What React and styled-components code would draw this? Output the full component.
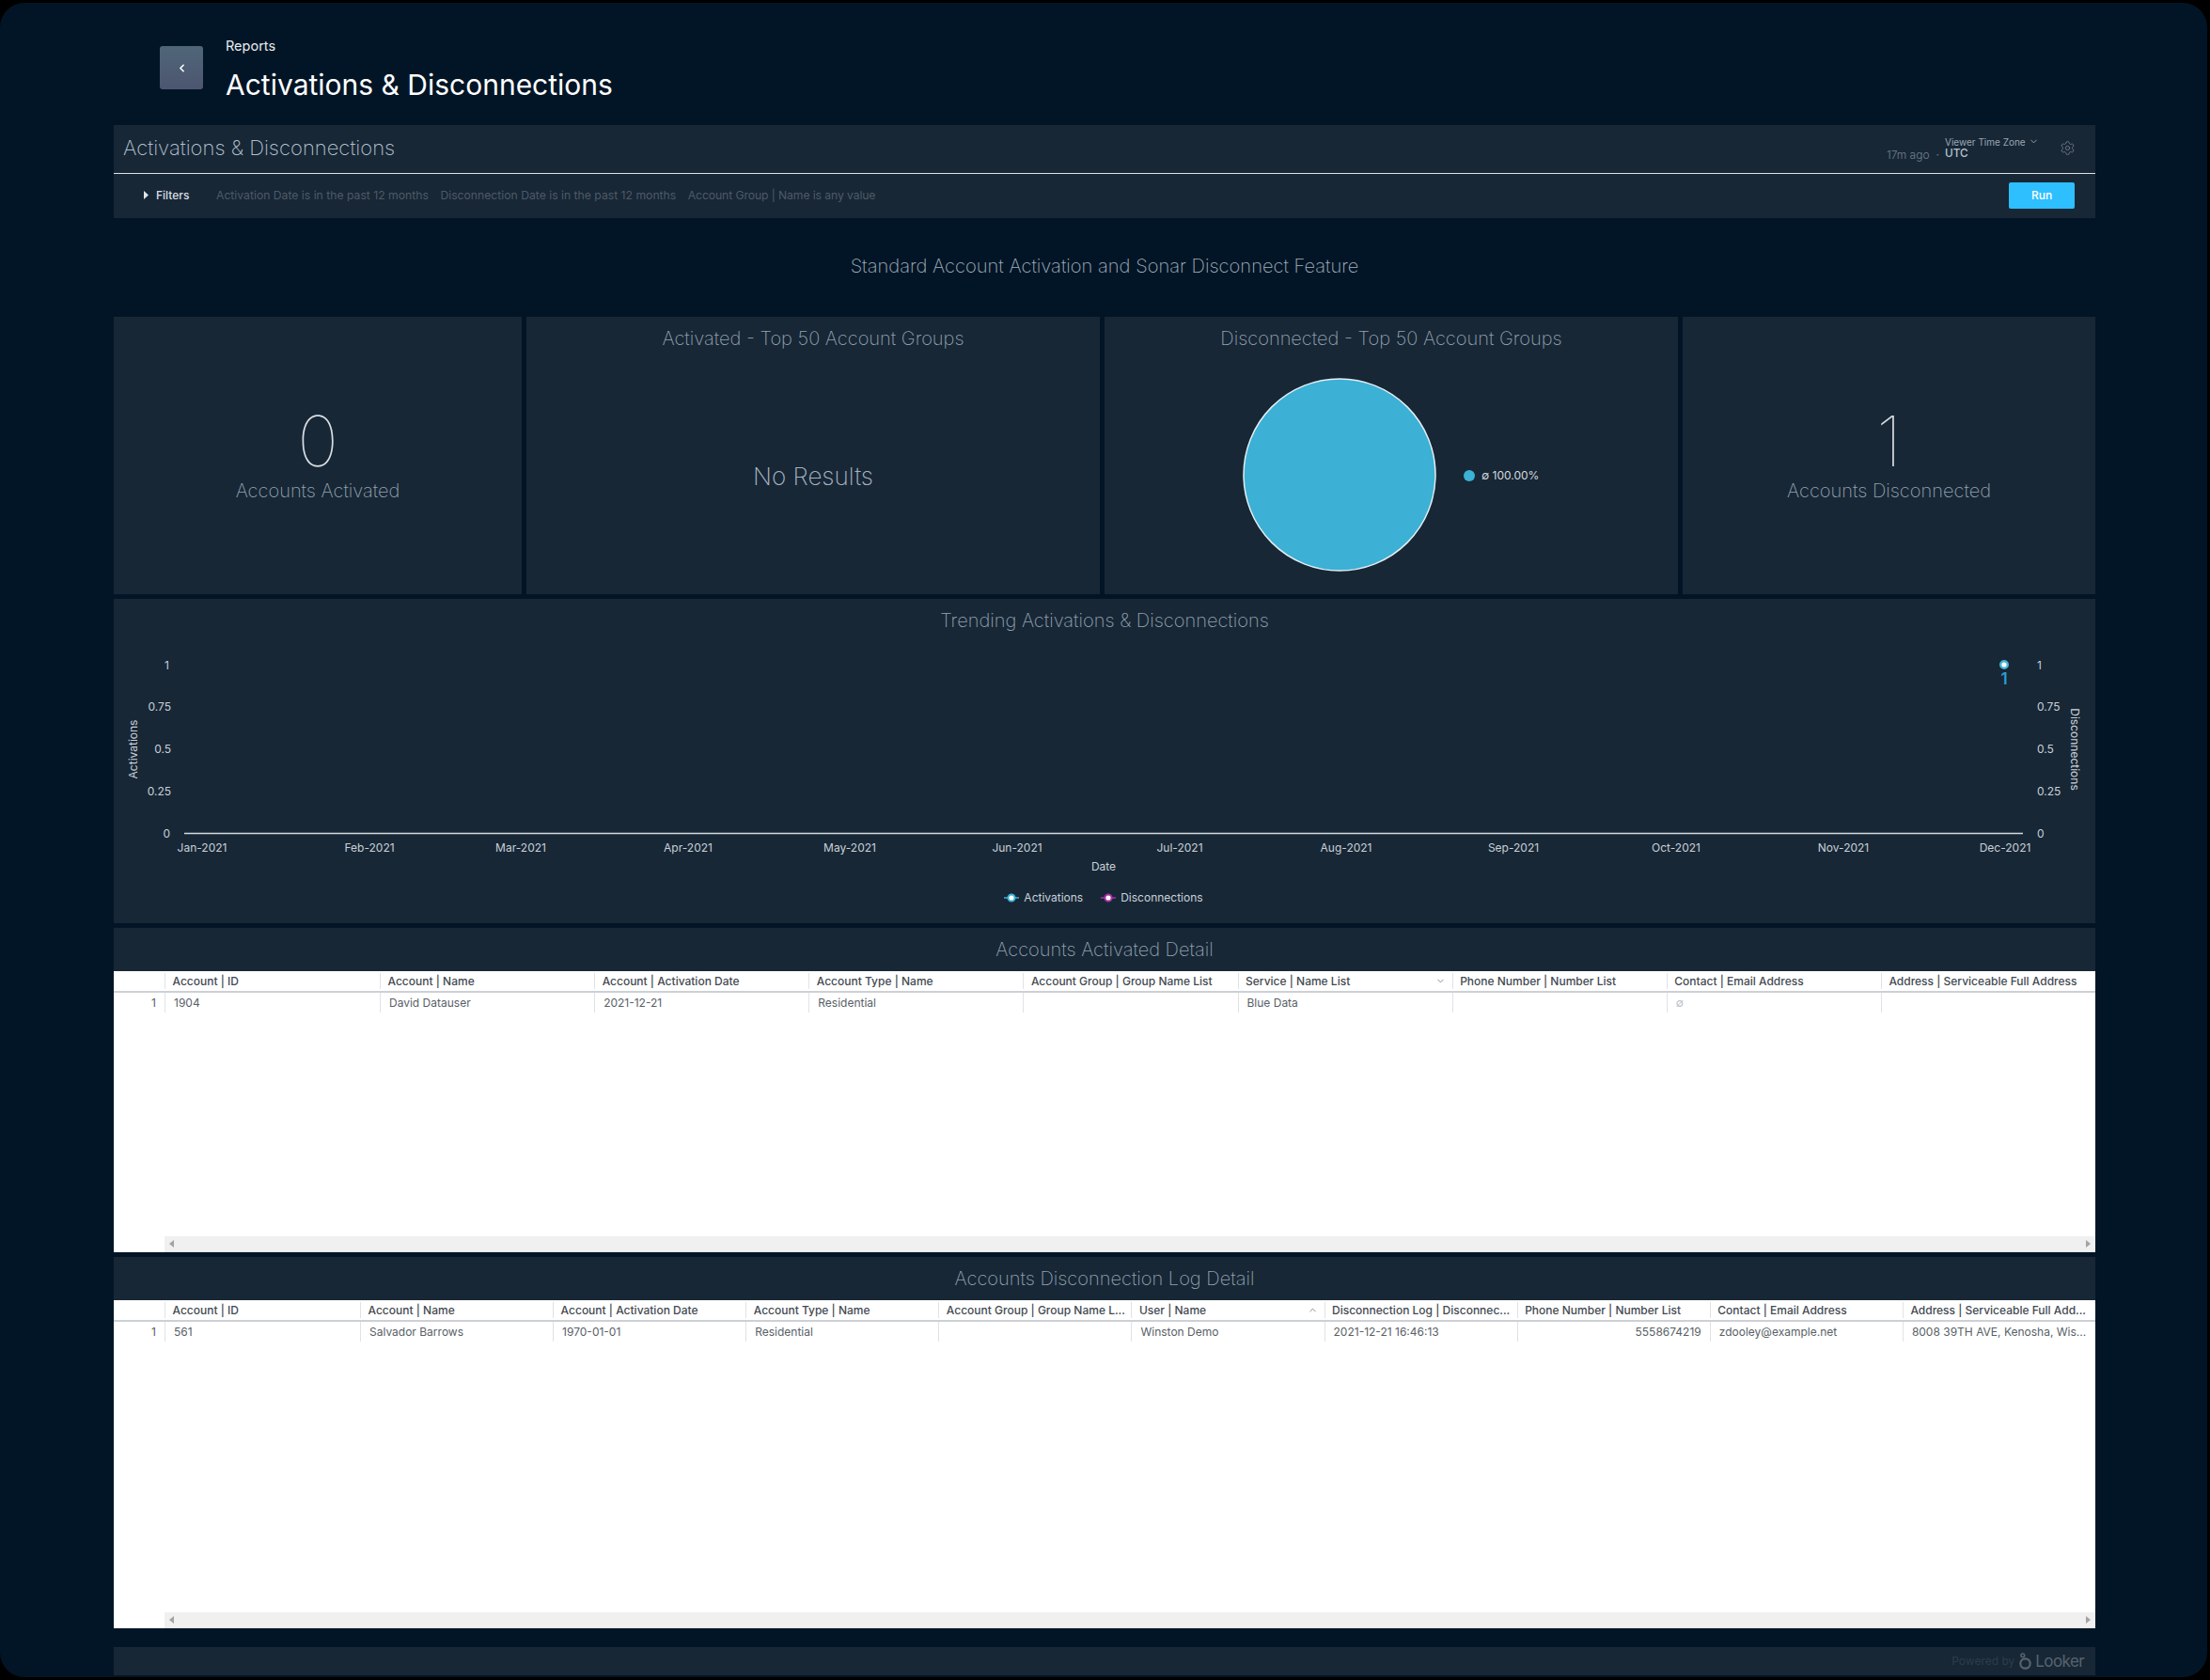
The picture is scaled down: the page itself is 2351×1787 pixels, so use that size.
import React from 'react';
import styled, { createGlobalStyle } from 'styled-components';
import { ChevronDown, ChevronLeft, ChevronUp, Settings } from 'lucide-react';

const Global = createGlobalStyle`
  html, body { margin: 0; padding: 0; background: #000; }
  body { font-family: Inter, "Noto Sans", "Liberation Sans", sans-serif; overflow: hidden; }
  * { box-sizing: border-box; }
`;

const Frame = styled.div`
  width: 2348px;
  height: 1781px;
  margin-top: 3px;
  padding: 0 119px 0 121px;
  background: #021526;
  border-radius: 26px;
  overflow: hidden;
`;

const PageHeader = styled.header`
  height: 130px;
  padding: 37px 0 0 49px;
  display: flex;
  gap: 24px;
`;

const BackButton = styled.button`
  width: 46px;
  height: 46px;
  margin-top: 9px;
  padding: 0;
  border: 0;
  border-radius: 3px;
  background: linear-gradient(180deg, #4f6678, #4d5570);
  color: #fff;
  display: flex;
  align-items: center;
  justify-content: center;
`;

const Crumb = styled.div`
  font-size: 14.5px;
  line-height: 18px;
  color: #e8edf1;
`;

const PageTitle = styled.h1`
  margin: 13px 0 0;
  font-size: 30px;
  line-height: 38px;
  font-weight: 400;
  color: #fff;
`;

const Panel = styled.section`
  background: #172736;
`;

const PanelTop = styled.div`
  height: 51.5px;
  padding: 0 21px 1.5px 10px;
  border-bottom: 1.5px solid #dfe3e8;
  display: flex;
  align-items: center;
`;

const PanelTitle = styled.div`
  flex: 1;
  padding-bottom: 1.5px;
  font-size: 22px;
  font-weight: 200;
  color: #b3c0cc;
`;

const Ago = styled.span`
  align-self: flex-end;
  margin-bottom: 10px;
  font-size: 12px;
  font-weight: 300;
  color: #76818c;
`;

const Dot = styled.span`
  align-self: flex-end;
  margin: 0 6px 10px 7px;
  font-size: 12px;
  color: #76818c;
`;

const Zone = styled.div`
  width: 122px;
  padding-bottom: 1px;
  color: #9ba8b4;
`;

const ZoneLabel = styled.div`
  display: flex;
  align-items: center;
  gap: 3px;
  font-size: 10px;
  line-height: 12px;
`;

const ZoneValue = styled.div`
  font-size: 11.8px;
  line-height: 13px;
  font-weight: 500;
  color: #b5c4d2;
`;

const Gear = styled(Settings)`
  color: #6f7780;
`;

const FilterRow = styled.div`
  height: 47px;
  padding: 0 22px 1px 32px;
  display: flex;
  align-items: center;
`;

const Caret = styled.svg`
  width: 5px;
  height: 9px;
  margin-right: 8px;
  fill: #dfe5ea;
`;

const FilterLabel = styled.span`
  width: 64px;
  font-size: 12px;
  font-weight: 500;
  color: #d9dfe5;
`;

const FilterText = styled.span`
  margin-right: 12.5px;
  font-size: 12.2px;
  letter-spacing: ${(p) => p.$tight ? '-0.1px' : '0'};
  color: #4f5a66;
`;

const RunButton = styled.button`
  width: 70px;
  height: 28px;
  margin-left: auto;
  border: 0;
  border-radius: 2px;
  background: #2ebfff;
  color: #fff;
  font: 500 12px Inter, sans-serif;
`;

const DashTitle = styled.div`
  height: 105px;
  padding-bottom: 3px;
  display: flex;
  align-items: center;
  justify-content: center;
  font-size: 20.1px;
  font-weight: 200;
  color: #a3b1be;
`;

const Stack = styled.div`
  display: flex;
  flex-direction: column;
  gap: 5px;
`;

const TopRow = styled.div`
  display: grid;
  grid-template-columns: 434px 610px 610px 439px;
  gap: 5px;
`;

const Tile = styled.div`
  position: relative;
  height: ${(p) => p.$h}px;
  background: #172736;
  display: flex;
  flex-direction: column;
  overflow: hidden;
`;

const TileTitle = styled.div`
  flex: none;
  height: ${(p) => p.$h || 46}px;
  display: flex;
  align-items: center;
  justify-content: center;
  font-size: 20px;
  font-weight: 200;
  color: #94a2af;
`;

const BigTile = styled(Tile)`
  align-items: center;
  padding-top: 95px;
`;

const BigNumber = styled.div`
  font-size: 74px;
  line-height: 74px;
  font-weight: 100;
  color: #d8dde2;
`;

const BigLabel = styled.div`
  margin-top: 4px;
  font-size: 20px;
  line-height: 24px;
  font-weight: 200;
  color: #94a2af;
`;

const NoResults = styled.div`
  margin-top: 107px;
  text-align: center;
  font-size: 26px;
  line-height: 34px;
  font-weight: 200;
  color: #a7b4c0;
`;

const PieWrap = styled.div`
  margin: 19px 0 0 147px;
  display: flex;
  align-items: center;
`;

const PieLegend = styled.div`
  margin: 2px 0 0 29px;
  display: flex;
  align-items: center;
  gap: 7px;
  font-size: 12px;
  color: #d5dade;
`;

const PieDot = styled.span`
  width: 12px;
  height: 12px;
  border-radius: 50%;
  background: #3cb0d5;
`;

const ChartSvg = styled.svg`
  flex: none;
  display: block;
  text {
    font-family: Inter, sans-serif;
    font-size: 12px;
    fill: #c9d0d7;
  }
`;

const Legend = styled.div`
  margin-top: 10px;
  padding-right: 2px;
  display: flex;
  justify-content: center;
  gap: 19px;
  font-size: 12px;
  line-height: 20px;
  color: #cbd2d9;
`;

const LegendItem = styled.span`
  display: flex;
  align-items: center;
  gap: 5px;
`;

const TableWrap = styled.div`
  flex: 1;
  display: flex;
  flex-direction: column;
  background: #fff;
`;

const Row = styled.div`
  display: grid;
  grid-template-columns: 54px ${(p) => p.$first}px repeat(${(p) => p.$cols - 1}, 1fr);
  align-items: center;
  height: ${(p) => (p.$head ? 23 : 21)}px;
  border-bottom: ${(p) => (p.$head ? '2px solid #ccd1d6' : '0')};
`;

const HeadCell = styled.div`
  position: relative;
  height: 17px;
  padding: 0 7.5px;
  border-left: 1px solid #dfe2e5;
  font-size: 12px;
  line-height: 17px;
  font-weight: 500;
  white-space: nowrap;
  overflow: hidden;
  color: #434a52;
`;

const BodyCell = styled.div`
  height: 21px;
  padding: 0 9px;
  border-left: 1px solid #dfe2e5;
  font-size: 12px;
  line-height: 21px;
  white-space: nowrap;
  overflow: hidden;
  text-align: ${(p) => (p.$right ? 'right' : 'left')};
  color: ${(p) => (p.$muted ? '#bcc1c6' : '#585f67')};
`;

const IndexCell = styled.div`
  padding-right: 9px;
  text-align: right;
  font-size: 12px;
  color: #585f67;
`;

const SortIcon = styled.span`
  position: absolute;
  right: 7px;
  top: 3px;
  color: #7f858b;
  line-height: 0;
`;

const Filler = styled.div`
  flex: 1;
`;

const Scrollbar = styled.div`
  height: 17px;
  margin-left: 54px;
  padding: 0 5px;
  background: #f0f0f0;
  border-bottom: 1px solid #e4e4e4;
  display: flex;
  align-items: center;
  justify-content: space-between;
`;

const ScrollArrow = styled.svg`
  width: 5px;
  height: 8px;
  fill: #a3a3a3;
`;

const Footer = styled.footer`
  height: 30px;
  margin-top: 20px;
  padding-right: 12px;
  background: #172736;
  display: flex;
  align-items: center;
  justify-content: flex-end;
`;

const Powered = styled.span`
  margin-right: 5px;
  font-size: 12px;
  color: #303c48;
`;

const LookerWord = styled.span`
  margin-left: 4px;
  font-size: 17px;
  letter-spacing: -0.6px;
  color: #59636d;
`;

const months = [
  ['Jan-2021', 215],
  ['Feb-2021', 393],
  ['Mar-2021', 554],
  ['Apr-2021', 732],
  ['May-2021', 904],
  ['Jun-2021', 1082],
  ['Jul-2021', 1255],
  ['Aug-2021', 1432],
  ['Sep-2021', 1610],
  ['Oct-2021', 1783],
  ['Nov-2021', 1961],
  ['Dec-2021', 2133],
];

const ticks = [
  ['1', 707, 180],
  ['0.75', 751.5, 182],
  ['0.5', 796.5, 182],
  ['0.25', 841.5, 182],
  ['0', 886.5, 181],
];

// svg origin sits at page (121, 683)
const ox = 121;
const oy = 683;

function TrendChart() {
  return (
    <ChartSvg width="2108" height="252" viewBox="0 0 2108 252">
      <text transform={`rotate(-90 20 ${797 - oy})`} x="20" y={797 - oy} textAnchor="middle" dominantBaseline="central">
        Activations
      </text>
      <text transform={`rotate(90 2086 ${797 - oy})`} x="2086" y={797 - oy} textAnchor="middle" dominantBaseline="central">
        Disconnections
      </text>
      {ticks.map(([label, y, right]) => (
        <g key={label}>
          <text x={right - ox} y={y - oy} textAnchor="end" dominantBaseline="central">{label}</text>
          <text x={2167 - ox} y={y - oy} dominantBaseline="central">{label}</text>
        </g>
      ))}
      <line x1={196 - ox} x2={2152 - ox} y1={886.5 - oy} y2={886.5 - oy} stroke="#d3d9df" strokeWidth="1.5" />
      {months.map(([label, x]) => (
        <text key={label} x={x - ox} y={901.5 - oy} textAnchor="middle" dominantBaseline="central">{label}</text>
      ))}
      <text x={1174 - ox} y={921.5 - oy} textAnchor="middle" dominantBaseline="central">Date</text>
      <circle cx={2132 - ox} cy={707 - oy} r="3.8" fill="#fff" stroke="#47b3db" strokeWidth="2.4" />
      <text
        x={2132 - ox}
        y={722 - oy}
        textAnchor="middle"
        dominantBaseline="central"
        style={{ fontSize: 17, fontWeight: 600, fill: '#2a9fd0' }}
      >
        1
      </text>
    </ChartSvg>
  );
}

function LegendMark({ color }) {
  return (
    <svg width="16" height="10" viewBox="0 0 16 10">
      <line x1="0" x2="16" y1="5" y2="5" stroke={color} strokeWidth="1.5" />
      <circle cx="8" cy="5" r="3.6" fill="#fff" stroke={color} strokeWidth="2" />
    </svg>
  );
}

function DataTable({ columns, first, row, sort }) {
  return (
    <TableWrap>
      <Row $head $cols={columns.length} $first={first}>
        <span />
        {columns.map((c, i) => (
          <HeadCell key={c}>
            {c}
            {sort && sort.col === i && (
              <SortIcon>
                {sort.dir === 'down' ? <ChevronDown size={11} /> : <ChevronUp size={11} />}
              </SortIcon>
            )}
          </HeadCell>
        ))}
      </Row>
      <Row $cols={columns.length} $first={first}>
        <IndexCell>1</IndexCell>
        {row.map((c, i) => (
          <BodyCell key={i} $right={c && c.right} $muted={c === '∅'}>
            {c && c.right ? c.right : c}
          </BodyCell>
        ))}
      </Row>
      <Filler />
      <Scrollbar>
        <ScrollArrow viewBox="0 0 5 8"><polygon points="5,0 5,8 0,4" /></ScrollArrow>
        <ScrollArrow viewBox="0 0 5 8"><polygon points="0,0 5,4 0,8" /></ScrollArrow>
      </Scrollbar>
    </TableWrap>
  );
}

const activatedCols = [
  'Account | ID',
  'Account | Name',
  'Account | Activation Date',
  'Account Type | Name',
  'Account Group | Group Name List',
  'Service | Name List',
  'Phone Number | Number List',
  'Contact | Email Address',
  'Address | Serviceable Full Address',
];
const activatedRow = ['1904', 'David Datauser', '2021-12-21', 'Residential', '', 'Blue Data', '', '∅', ''];

const disconnectCols = [
  'Account | ID',
  'Account | Name',
  'Account | Activation Date',
  'Account Type | Name',
  'Account Group | Group Name L...',
  'User | Name',
  'Disconnection Log | Disconnec...',
  'Phone Number | Number List',
  'Contact | Email Address',
  'Address | Serviceable Full Add...',
];
const disconnectRow = [
  '561',
  'Salvador Barrows',
  '1970-01-01',
  'Residential',
  '',
  'Winston Demo',
  '2021-12-21 16:46:13',
  { right: '5558674219' },
  'zdooley@example.net',
  '8008 39TH AVE, Kenosha, Wis...',
];

export default function App() {
  return (
    <>
      <Global />
      <Frame>
        <PageHeader>
          <BackButton aria-label="Back">
            <ChevronLeft size={13} strokeWidth={3} />
          </BackButton>
          <div>
            <Crumb>Reports</Crumb>
            <PageTitle>Activations &amp; Disconnections</PageTitle>
          </div>
        </PageHeader>

        <Panel>
          <PanelTop>
            <PanelTitle>Activations &amp; Disconnections</PanelTitle>
            <Ago>17m ago</Ago>
            <Dot>·</Dot>
            <Zone>
              <ZoneLabel>
                Viewer Time Zone <ChevronDown size={11} />
              </ZoneLabel>
              <ZoneValue>UTC</ZoneValue>
            </Zone>
            <Gear size={17} strokeWidth={1.4} />
          </PanelTop>
          <FilterRow>
            <Caret viewBox="0 0 5 9"><polygon points="0,0 5,4.5 0,9" /></Caret>
            <FilterLabel>Filters</FilterLabel>
            <FilterText>Activation Date is in the past 12 months</FilterText>
            <FilterText>Disconnection Date is in the past 12 months</FilterText>
            <FilterText $tight>Account Group | Name is any value</FilterText>
            <RunButton>Run</RunButton>
          </FilterRow>
        </Panel>

        <DashTitle>Standard Account Activation and Sonar Disconnect Feature</DashTitle>

        <Stack>
          <TopRow>
            <BigTile $h={295}>
              <BigNumber>0</BigNumber>
              <BigLabel>Accounts Activated</BigLabel>
            </BigTile>
            <Tile $h={295}>
              <TileTitle>Activated - Top 50 Account Groups</TileTitle>
              <NoResults>No Results</NoResults>
            </Tile>
            <Tile $h={295}>
              <TileTitle>Disconnected - Top 50 Account Groups</TileTitle>
              <PieWrap>
                <svg width="206" height="206" viewBox="0 0 206 206">
                  <circle cx="103" cy="103" r="102" fill="#3cb0d5" stroke="#e4eef3" strokeWidth="1.5" />
                </svg>
                <PieLegend>
                  <PieDot />∅ 100.00%
                </PieLegend>
              </PieWrap>
            </Tile>
            <BigTile $h={295}>
              <BigNumber>1</BigNumber>
              <BigLabel>Accounts Disconnected</BigLabel>
            </BigTile>
          </TopRow>

          <Tile $h={345}>
            <TileTitle>Trending Activations &amp; Disconnections</TileTitle>
            <TrendChart />
            <Legend>
              <LegendItem>
                <LegendMark color="#3cb0d5" />
                Activations
              </LegendItem>
              <LegendItem>
                <LegendMark color="#a8329f" />
                Disconnections
              </LegendItem>
            </Legend>
          </Tile>

          <Tile $h={345}>
            <TileTitle>Accounts Activated Detail</TileTitle>
            <DataTable columns={activatedCols} first={229} row={activatedRow} sort={{ col: 5, dir: 'down' }} />
          </Tile>

          <Tile $h={395}>
            <TileTitle>Accounts Disconnection Log Detail</TileTitle>
            <DataTable columns={disconnectCols} first={208} row={disconnectRow} sort={{ col: 5, dir: 'up' }} />
          </Tile>
        </Stack>

        <Footer>
          <Powered>Powered by</Powered>
          <svg width="13" height="18" viewBox="0 0 13 18">
            <circle cx="6.5" cy="11.5" r="5.2" fill="none" stroke="#59636d" strokeWidth="2.2" />
            <circle cx="3.8" cy="2.8" r="1.9" fill="none" stroke="#59636d" strokeWidth="1.5" />
          </svg>
          <LookerWord>Looker</LookerWord>
        </Footer>
      </Frame>
    </>
  );
}
